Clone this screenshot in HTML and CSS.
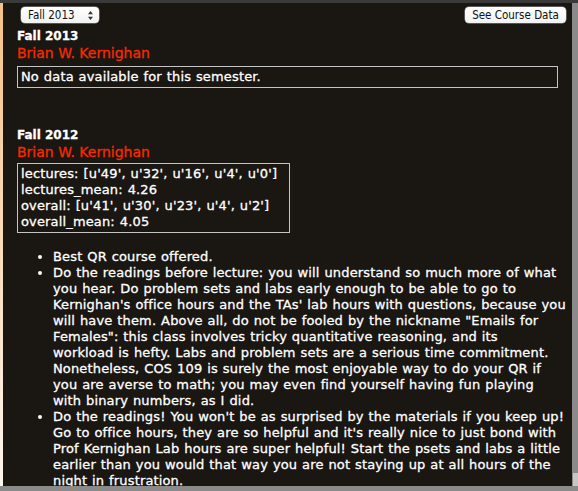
FILE: index.html
```html
<!DOCTYPE html>
<html>
<head>
<meta charset="utf-8">
<title>Course Reviews</title>
<link rel="stylesheet" href="styles.css">
</head>
<body>
<div class="frame">
  <div class="topbar"></div>
  <div class="leftstrip"></div>
  <main class="page">
    <div class="toolbar">
      <div class="select">
        <span>Fall 2013</span>
        <svg class="updown" width="5" height="9" viewBox="0 0 5 9"><path d="M2.5 0 L5 3.2 L0 3.2 Z M2.5 9 L5 5.8 L0 5.8 Z" fill="#333"/></svg>
      </div>
      <button class="btn">See Course Data</button>
    </div>
    <section class="sem first">
      <div class="term">Fall 2013</div>
      <div class="prof">Brian W. Kernighan</div>
      <div class="box">No data available for this semester.</div>
    </section>
    <section class="sem second">
      <div class="term">Fall 2012</div>
      <div class="prof">Brian W. Kernighan</div>
      <div class="box stats">lectures: [u'49', u'32', u'16', u'4', u'0']<br>lectures_mean: 4.26<br>overall: [u'41', u'30', u'23', u'4', u'2']<br>overall_mean: 4.05</div>
      <ul class="comments">
        <li>Best QR course offered.</li>
        <li>Do the readings before lecture: you will understand so much more of what you hear. Do problem sets and labs early enough to be able to go to Kernighan's office hours and the TAs' lab hours with questions, because you will have them. Above all, do not be fooled by the nickname "Emails for Females": this class involves tricky quantitative reasoning, and its<br>workload is hefty. Labs and problem sets are a serious time commitment. Nonetheless, COS 109 is surely the most enjoyable way to do your QR if you are averse to math; you may even find yourself having fun playing with&nbsp;binary numbers, as I did.</li>
        <li>Do the readings! You won't be as surprised by the materials if you keep up! Go to office hours, they are so helpful and it's really nice to just bond with Prof Kernighan Lab hours are super helpful! Start the psets and labs a little earlier than you would that way you are not staying up at all hours of the night in frustration.</li>
      </ul>
    </section>
  </main>
  <div class="scrollbar"><div class="thumb"></div></div>
  <div class="bottombar"></div>
</div>
</body>
</html>
```

FILE: styles.css
```css
body {
  margin: 0;
  background: #1a1612;
}

.frame {
  width: 578px;
  height: 491px;
  display: grid;
  grid-template-columns: 3px 1fr 6px;
  grid-template-rows: 3px 1fr 5px;
  overflow: hidden;
  background: #1a1612;
  font-family: "DejaVu Sans", Verdana, sans-serif;
  color: #fff;
}

.topbar {
  grid-column: 1 / -1;
  background: #3a3a3a;
}

.leftstrip {
  background: linear-gradient(#f7c286, #fdf6ee);
}

.page {
  overflow: hidden;
  min-width: 0;
}

.toolbar {
  display: flex;
  justify-content: space-between;
  align-items: center;
  padding: 4px 6px 0 18px;
}

.select {
  box-sizing: border-box;
  width: 78px;
  height: 16px;
  background: linear-gradient(#ffffff, #f1f1f1);
  border-radius: 4px;
  box-shadow: 0 0 0 0.5px #9a9a9a, 0 1px 1px rgba(0,0,0,0.3);
  display: flex;
  align-items: center;
  justify-content: space-between;
  padding: 0 6px 0 7px;
  font-family: "DejaVu Sans Condensed", "DejaVu Sans", sans-serif;
  font-size: 11.5px;
  color: #111;
}

.btn {
  box-sizing: border-box;
  height: 16px;
  width: 101px;
  padding: 0;
  border: none;
  border-radius: 4px;
  background: linear-gradient(#ffffff, #f2f2f2);
  box-shadow: 0 0 0 0.5px #9a9a9a, 0 1px 1px rgba(0,0,0,0.3);
  font-family: "DejaVu Sans Condensed", "DejaVu Sans", sans-serif;
  font-size: 11.5px;
  line-height: 16px;
  color: #111;
}

.sem {
  margin: 0 14px;
}

.sem.first {
  margin-top: 5px;
}

.sem.second {
  margin-top: 39px;
}

.term {
  font-weight: bold;
  font-size: 12px;
  line-height: 16px;
  -webkit-text-stroke: 0.3px #fff;
}

.prof {
  color: #f82a00;
  font-size: 14px;
  line-height: 18px;
  -webkit-text-stroke: 0.3px #f82a00;
}

.box {
  margin-top: 4px;
  border: 1px solid #c4c4c4;
  padding: 2px 3px;
  font-size: 13px;
  line-height: 16px;
  letter-spacing: 0.15px;
  word-spacing: 0.6px;
  -webkit-text-stroke: 0.3px #fff;
}

.second .box {
  margin-top: 2px;
}

.box.stats {
  width: fit-content;
  padding-right: 12px;
}

.comments {
  margin: 16px -10px 0 0;
  padding-left: 36px;
  font-size: 13px;
  line-height: 16px;
  letter-spacing: 0.15px;
  word-spacing: 0.6px;
  -webkit-text-stroke: 0.3px #fff;
}

.scrollbar {
  background: #8a8a8a;
  display: flex;
  flex-direction: column;
  justify-content: flex-end;
}

.thumb {
  height: 13px;
  margin-left: 1px;
  background: #c6c6c6;
}

.bottombar {
  grid-column: 1 / -1;
  background: #8a8a8a;
}
```
